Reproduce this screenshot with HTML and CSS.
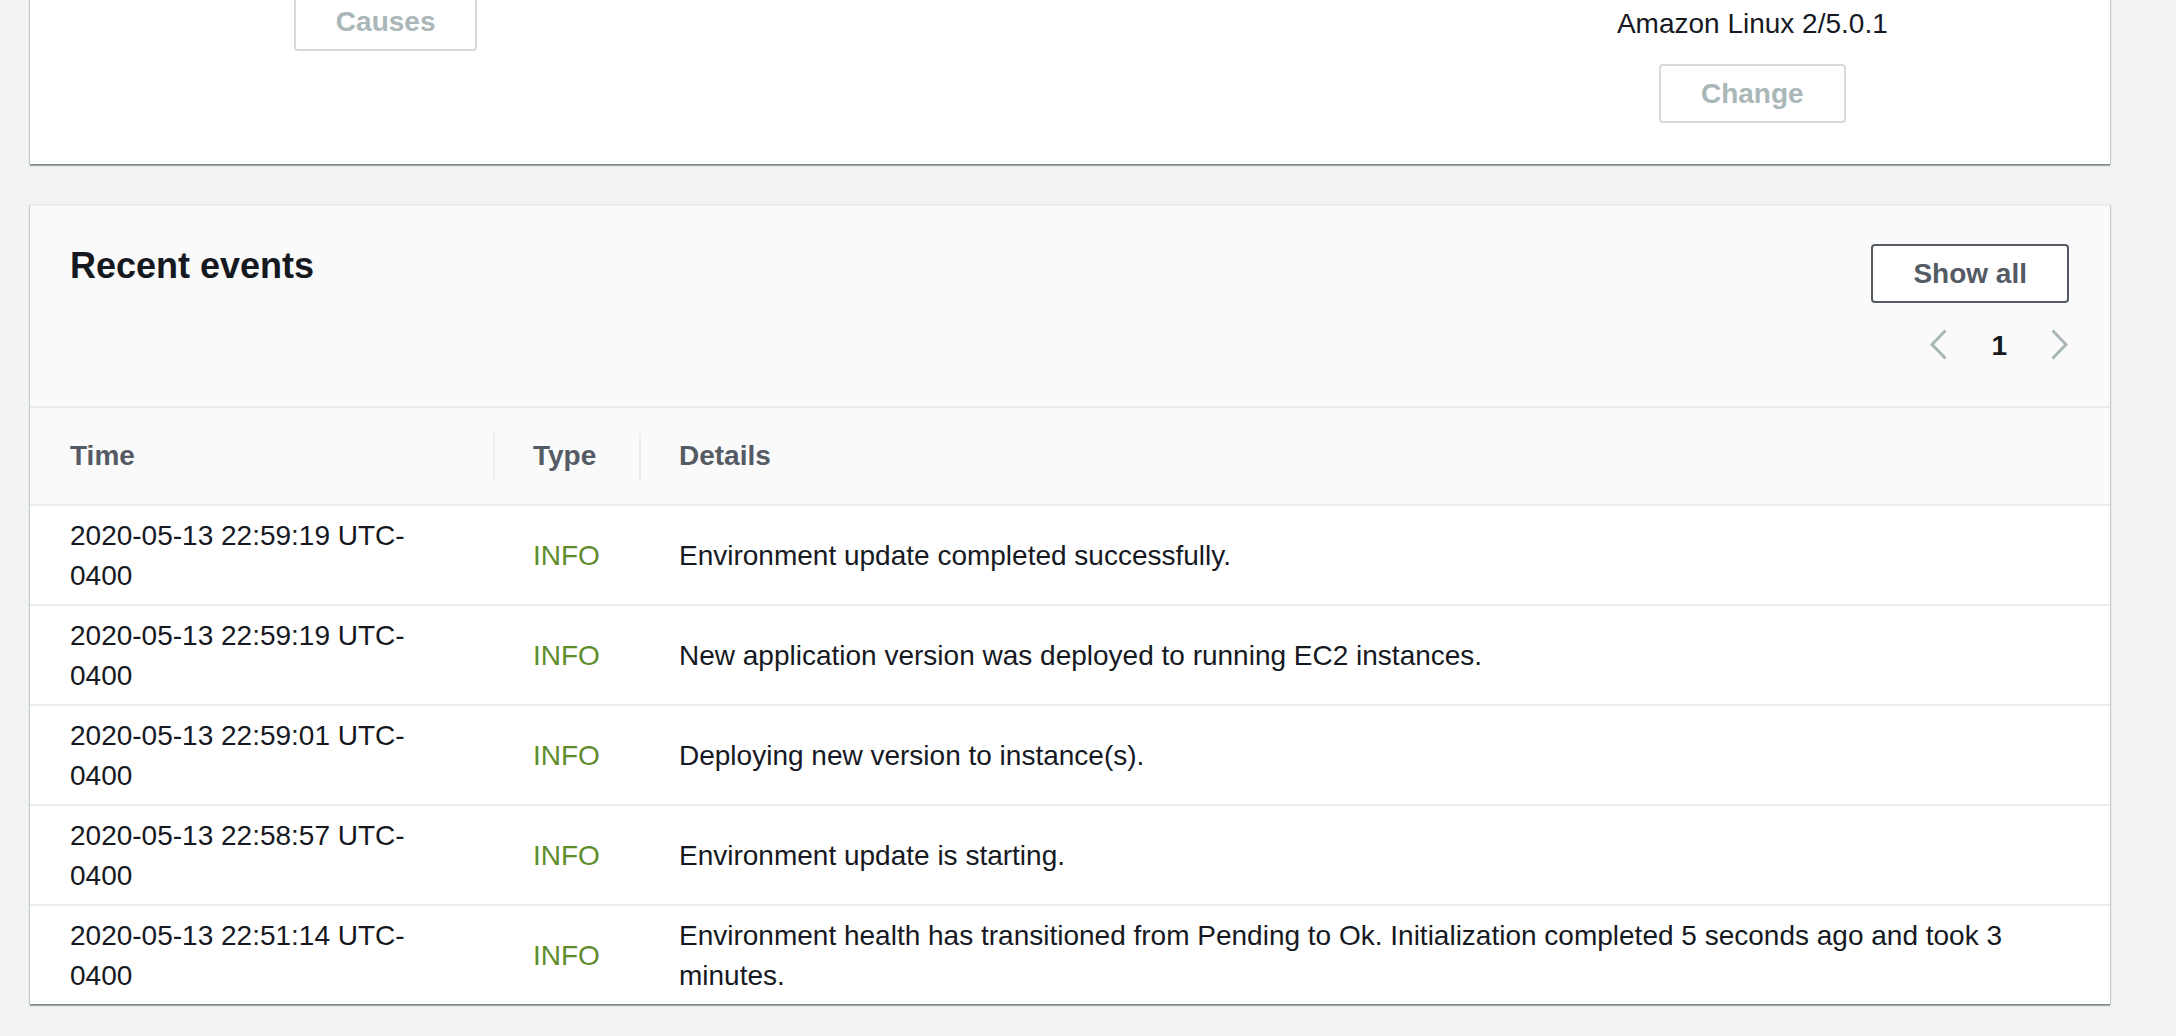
FILE: index.html
```html
<!DOCTYPE html>
<html lang="en">
<head>
<meta charset="utf-8">
<title>Environment overview</title>
<link rel="stylesheet" href="styles.css">
</head>
<body>
<main class="page">
  <section class="card overview">
    <div class="ov-col">
      <button class="btn btn-disabled" disabled>Causes</button>
    </div>
    <div class="ov-col"></div>
    <div class="ov-col">
      <div class="ov-value">Amazon Linux 2/5.0.1</div>
      <button class="btn btn-disabled ov-btn" disabled>Change</button>
    </div>
  </section>

  <section class="card events">
    <header class="events-head">
      <h2 class="events-title">Recent events</h2>
      <div class="events-tools">
        <button class="btn btn-normal">Show all</button>
        <nav class="pager">
          <svg class="chev" width="20" height="32" viewBox="0 0 20 32" aria-hidden="true"><path d="M16.5 1.5 L3 15.5 L16.5 29.5"/></svg>
          <span class="pager-num">1</span>
          <svg class="chev" width="20" height="32" viewBox="0 0 20 32" aria-hidden="true"><path d="M3.5 1.5 L17 15.5 L3.5 29.5"/></svg>
        </nav>
      </div>
    </header>
    <table class="events-table">
      <colgroup><col class="c-time"><col class="c-type"><col class="c-details"></colgroup>
      <thead>
        <tr><th>Time</th><th>Type</th><th>Details</th></tr>
      </thead>
      <tbody>
        <tr><td>2020-05-13 22:59:19 UTC-<wbr>0400</td><td class="sev">INFO</td><td>Environment update completed successfully.</td></tr>
        <tr><td>2020-05-13 22:59:19 UTC-<wbr>0400</td><td class="sev">INFO</td><td>New application version was deployed to running EC2 instances.</td></tr>
        <tr><td>2020-05-13 22:59:01 UTC-<wbr>0400</td><td class="sev">INFO</td><td>Deploying new version to instance(s).</td></tr>
        <tr><td>2020-05-13 22:58:57 UTC-<wbr>0400</td><td class="sev">INFO</td><td>Environment update is starting.</td></tr>
        <tr><td>2020-05-13 22:51:14 UTC-<wbr>0400</td><td class="sev">INFO</td><td>Environment health has transitioned from Pending to Ok. Initialization completed 5 seconds ago and took 3 minutes.</td></tr>
      </tbody>
    </table>
  </section>
</main>
</body>
</html>
```

FILE: styles.css
```css
* { box-sizing: border-box; }

html, body { margin: 0; }

body {
  background: #f2f3f3;
  font-family: "Liberation Sans", Arial, Helvetica, sans-serif;
  font-size: 28px;
  line-height: 40px;
  color: #16191f;
}

.page {
  width: 2080px;
  margin-left: 30px;
  padding-bottom: 40px;
}

.card {
  background: #fff;
  box-shadow: 0 2px 1px 0 rgba(0, 28, 36, .3),
              1px 1px 1px 0 rgba(0, 28, 36, .15),
              -1px 1px 1px 0 rgba(0, 28, 36, .15);
}

/* top overview card (scrolled partly out of view) */
.overview {
  margin-top: -8px;
  display: grid;
  grid-template-columns: repeat(3, 1fr);
  padding: 0 16px 41px 14px;
}

.ov-col {
  display: flex;
  flex-direction: column;
  align-items: center;
}

.ov-value { margin-top: 12px; }

.ov-btn { margin-top: 20px; }

.btn {
  font-family: inherit;
  font-size: 28px;
  font-weight: 700;
  line-height: 39px;
  height: 59px;
  padding: 8px 40px;
  border: 2px solid;
  border-radius: 4px;
  background: #fff;
  cursor: pointer;
}

.btn-disabled {
  color: #aab7b8;
  border-color: #d5dbdb;
  cursor: default;
}

.btn-normal {
  color: #545b64;
  border-color: #545b64;
}

/* events card */
.events {
  margin-top: 40px;
  border-top: 2px solid #eaeded;
}

.events-head {
  display: flex;
  justify-content: space-between;
  align-items: flex-start;
  padding: 38px 41px 40px 40px;
  background: #fafafa;
  border-bottom: 2px solid #eaeded;
}

.events-title {
  margin: 0;
  font-size: 36px;
  line-height: 44px;
  font-weight: 700;
  color: #16191f;
}

.events-tools {
  display: flex;
  flex-direction: column;
  align-items: flex-end;
}

.pager {
  display: flex;
  align-items: flex-start;
  gap: 42px;
  margin-top: 23px;
  height: 40px;
}

.chev {
  margin-top: 3px;
  fill: none;
  stroke: #aab7b8;
  stroke-width: 3;
}

.pager-num {
  font-weight: 700;
  color: #16191f;
}

.events-table {
  width: 100%;
  table-layout: fixed;
  border-collapse: separate;
  border-spacing: 0;
}

.c-time { width: 463px; }
.c-type { width: 146px; }

.events-table th {
  text-align: left;
  font-weight: 700;
  color: #545b64;
  padding: 28px 40px;
  background: #fafafa;
  border-bottom: 2px solid #eaeded;
}

.events-table th + th {
  background: linear-gradient(#eaeded, #eaeded) left center / 2px 47px no-repeat, #fafafa;
}

.events-table td {
  padding: 10px 40px 8px;
  vertical-align: middle;
  font-weight: 400;
}

.events-table tbody tr + tr td {
  border-top: 2px solid #eaeded;
}

.events-table td.sev {
  color: #5f8c2a;
}
```
